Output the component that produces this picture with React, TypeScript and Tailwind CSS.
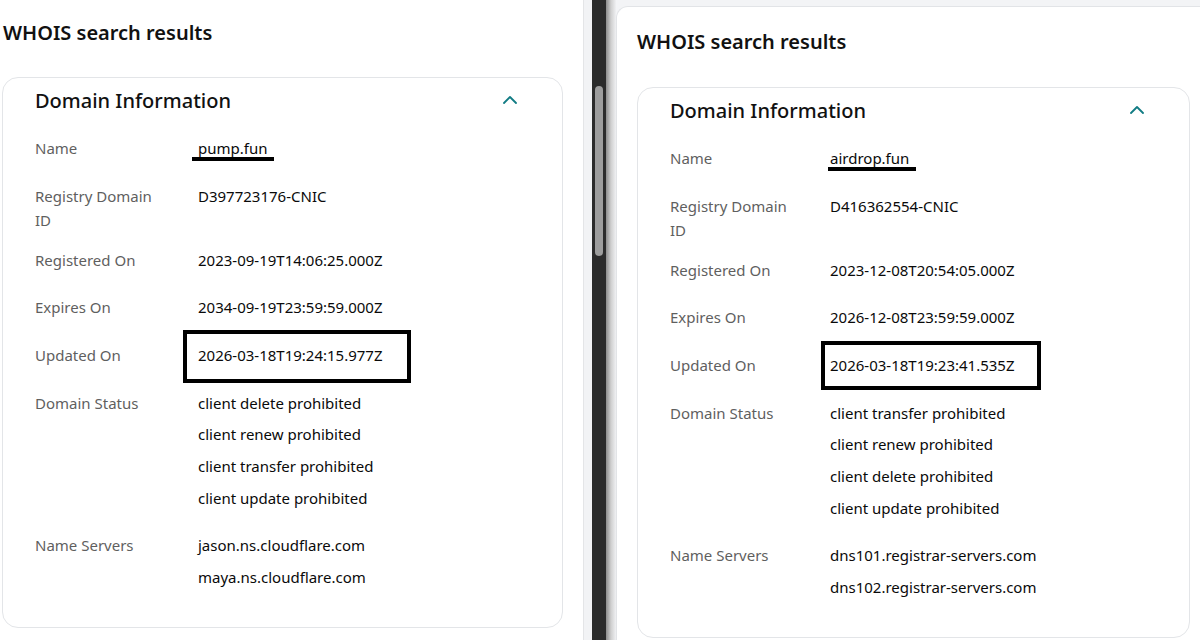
const FONT = { fontFamily: "'Noto Sans', 'Liberation Sans', Arial, sans-serif" };

interface Row {
  label: string[];
  values: string[];
  mark?: "underline" | "box";
}

interface WhoisData {
  rows: Row[];
}

const pump: WhoisData = {
  rows: [
    { label: ["Name"], values: ["pump.fun"], mark: "underline" },
    { label: ["Registry Domain", "ID"], values: ["D397723176-CNIC"] },
    { label: ["Registered On"], values: ["2023-09-19T14:06:25.000Z"] },
    { label: ["Expires On"], values: ["2034-09-19T23:59:59.000Z"] },
    { label: ["Updated On"], values: ["2026-03-18T19:24:15.977Z"], mark: "box" },
    {
      label: ["Domain Status"],
      values: [
        "client delete prohibited",
        "client renew prohibited",
        "client transfer prohibited",
        "client update prohibited",
      ],
    },
    { label: ["Name Servers"], values: ["jason.ns.cloudflare.com", "maya.ns.cloudflare.com"] },
  ],
};

const airdrop: WhoisData = {
  rows: [
    { label: ["Name"], values: ["airdrop.fun"], mark: "underline" },
    { label: ["Registry Domain", "ID"], values: ["D416362554-CNIC"] },
    { label: ["Registered On"], values: ["2023-12-08T20:54:05.000Z"] },
    { label: ["Expires On"], values: ["2026-12-08T23:59:59.000Z"] },
    { label: ["Updated On"], values: ["2026-03-18T19:23:41.535Z"], mark: "box" },
    {
      label: ["Domain Status"],
      values: [
        "client transfer prohibited",
        "client renew prohibited",
        "client delete prohibited",
        "client update prohibited",
      ],
    },
    {
      label: ["Name Servers"],
      values: ["dns101.registrar-servers.com", "dns102.registrar-servers.com"],
    },
  ],
};

function ChevronUp() {
  return (
    <svg width="14" height="10" viewBox="0 0 14 10" fill="none" className="-mt-[3px]">
      <path
        d="M1 8 L7 2 L13 8"
        stroke="#127c84"
        strokeWidth={1.8}
        strokeLinecap="round"
        strokeLinejoin="round"
      />
    </svg>
  );
}

function DomainCard({
  data,
  labelWidth,
  wide,
}: {
  data: WhoisData;
  labelWidth: string;
  wide: boolean;
}) {
  return (
    <div
      className={`${wide ? "w-[561px]" : "w-[553px]"} shrink-0 rounded-[16px] border border-[#e3e5e8] bg-white pl-[32px] pt-[9px] pb-[14px]`}
    >
      <div className="flex h-[28px] items-center justify-between pr-[45px]">
        <h2 className="text-[20px] font-medium leading-[28px] text-[#111111]">
          Domain Information
        </h2>
        <ChevronUp />
      </div>
      <div className="mt-[21px] flex flex-col">
        {data.rows.map((row) => (
          <div key={row.label.join(" ")} className="flex pb-[16px]">
            <div className={`${labelWidth} shrink-0 text-[15px] leading-[24px] text-[#5f5f5f]`}>
              {row.label.map((l) => (
                <div key={l}>{l}</div>
              ))}
            </div>
            <div className="relative flex flex-col">
              {row.values.map((v) => (
                <div key={v} className="mb-[7.67px] text-[15px] leading-[24px] text-[#0a0a0a]">
                  {v}
                </div>
              ))}
              {row.mark === "underline" && (
                <div
                  className={`absolute top-[21px] h-[4px] bg-black ${wide ? "-left-[6px] w-[82px]" : "-left-[2px] w-[88px]"}`}
                />
              )}
              {row.mark === "box" && (
                <div
                  className={`absolute border-[4px] border-black ${wide ? "-left-[15px] -top-[13px] h-[53px] w-[228px]" : "-left-[9px] -top-[12px] h-[49px] w-[220px]"}`}
                />
              )}
            </div>
          </div>
        ))}
      </div>
    </div>
  );
}

export default function App() {
  return (
    <div className="flex h-[640px] w-[1200px] overflow-hidden bg-white" style={FONT}>
      {/* left screenshot */}
      <div className="w-[583px] shrink-0 bg-white pl-[2px] pt-[19px]">
        <h1 className="pl-[1px] text-[20px] font-semibold leading-[28px] text-[#111111]">
          WHOIS search results
        </h1>
        <div className="mt-[30px]">
          <DomainCard data={pump} labelWidth="w-[163px]" wide />
        </div>
      </div>

      {/* divider */}
      <div className="w-[9px] shrink-0 border-l border-[#e4e5e7] bg-[#f2f3f5]" />
      <div className="w-[14px] shrink-0 bg-[#2b2b2b] pl-[3px] pt-[86px]">
        <div className="h-[170px] w-[8px] rounded-full bg-[#9d9d9d]" />
      </div>
      <div className="w-[10px] shrink-0 bg-gradient-to-r from-[#8d8d8d] via-[#cfcfcf] to-[#f0f1f3]" />

      {/* right screenshot */}
      <div className="flex-1 bg-[#f3f4f6] pt-[6px]">
        <div className="h-full rounded-tl-[12px] border-l border-t border-[#e2e4e7] bg-white pl-[20px] pt-[21px]">
          <h1 className="text-[20px] font-semibold leading-[28px] text-[#111111]">
            WHOIS search results
          </h1>
          <div className="mt-[31px]">
            <DomainCard data={airdrop} labelWidth="w-[160px]" wide={false} />
          </div>
        </div>
      </div>
    </div>
  );
}
